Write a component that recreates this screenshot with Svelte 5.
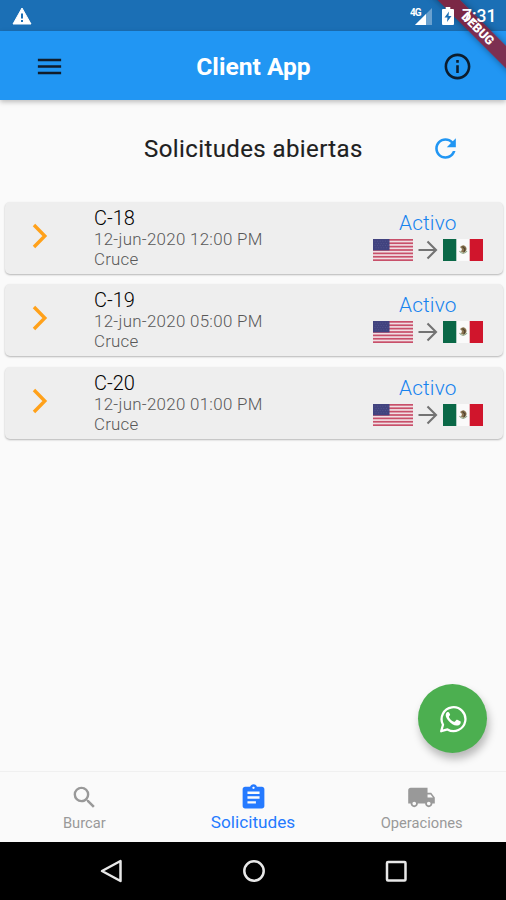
<script>
  const requests = [
    { id: 'C-18', date: '12-jun-2020 12:00 PM', kind: 'Cruce', status: 'Activo' },
    { id: 'C-19', date: '12-jun-2020 05:00 PM', kind: 'Cruce', status: 'Activo' },
    { id: 'C-20', date: '12-jun-2020 01:00 PM', kind: 'Cruce', status: 'Activo' }
  ];
  const stripes = [0, 1, 2, 3, 4, 5, 6];
</script>

<div class="screen">
  <div class="status">
    <svg class="warn" width="20" height="18" viewBox="0 0 20 18">
      <path d="M10 1 19 17H1Z" fill="#fff" stroke="#fff" stroke-linejoin="round" />
      <path d="M10 6.5v5M10 13v2" stroke="#1b6fb5" stroke-width="2" />
    </svg>
    <div class="system">
      <svg width="24" height="22" viewBox="0 0 24 22">
        <path d="M22 3V20H5Z" fill="#fff" opacity=".35" />
        <path d="M16 9V20H5Z" fill="#fff" />
        <text x="0" y="10.500" class="net">4G</text>
      </svg>
      <svg class="battery" width="12" height="18" viewBox="0 0 12 18">
        <path d="M1 2h2.7V0h4.6v2H11q1 0 1 1v14q0 1-1 1H1q-1 0-1-1V3q0-1 1-1Z" fill="#fff" />
        <path d="M7 4.500 2.500 10.500h3L5 15l4.500-6h-3Z" fill="#1b6fb5" />
      </svg>
      <span class="clock">7:31</span>
    </div>
  </div>

  <header>
    <svg width="31" height="31" viewBox="0 0 24 24" fill="#111d2b"><path d="M3 18h18v-2H3v2zm0-5h18v-2H3v2zm0-7v2h18V6H3z" /></svg>
    <h1>Client App</h1>
    <svg width="31" height="31" viewBox="0 0 24 24" fill="#0c1c2d"><path d="M11 7h2v2h-2zm0 4h2v6h-2zm1-9C6.48 2 2 6.48 2 12s4.48 10 10 10 10-4.48 10-10S17.52 2 12 2zm0 18c-4.41 0-8-3.59-8-8s3.59-8 8-8 8 3.59 8 8-3.59 8-8 8z" /></svg>
  </header>

  <div class="banner"><div class="ribbon">DEBUG</div></div>

  <main>
    <div class="heading">
      <h2>Solicitudes abiertas</h2>
      <svg width="31" height="31" viewBox="0 0 24 24" fill="#2196f3"><path d="M17.65 6.35C16.2 4.9 14.21 4 12 4c-4.42 0-7.99 3.58-7.99 8s3.57 8 7.99 8c3.73 0 6.84-2.55 7.73-6h-2.08c-.82 2.33-3.04 4-5.65 4-3.31 0-6-2.69-6-6s2.69-6 6-6c1.66 0 3.14.69 4.22 1.78L13 11h7V4l-2.35 2.35z" /></svg>
    </div>

    <div class="list">
      {#each requests as r}
        <article>
          <svg class="chevron" width="16" height="26" viewBox="0 0 16 26"><path d="M2 2 12.8 13 2 24" fill="none" stroke="#ffa11a" stroke-width="3.4" /></svg>
          <div class="info">
            <span class="id">{r.id}</span>
            <span class="sub date">{r.date}</span>
            <span class="sub">{r.kind}</span>
          </div>
          <div class="state">
            <span class="active">{r.status}</span>
            <div class="route">
              <svg width="40" height="22" viewBox="0 0 40 22">
                <rect width="40" height="22" fill="#f0dfe3" />
                {#each stripes as s}
                  <rect y={s * 3.385} width="40" height="1.7" fill="#c8506a" />
                {/each}
                <rect width="16.5" height="11.4" fill="#41437f" />
                <path d="M1.5 2.2h14M2.5 4.4h13M1.5 6.6h14M2.5 8.8h13" stroke="#5c5e94" stroke-width=".7" stroke-dasharray="1 1.6" />
              </svg>
              <svg class="arrow" width="20" height="20" viewBox="0 0 20 20"><path d="M.5 10H18M9.5 1.5 18 10 9.5 18.5" fill="none" stroke="#737373" stroke-width="2.1" /></svg>
              <svg width="40" height="22" viewBox="0 0 40 22">
                <rect width="40" height="22" fill="#fafafa" />
                <rect width="13.3" height="22" fill="#0a6847" />
                <rect x="26.7" width="13.3" height="22" fill="#d0152c" />
                <path d="M17 8q3-3 5-1 2.500 2 1 5l-2 2-3-1 1-3Z" fill="#8b7651" />
                <path d="M19.500 7.500 22 10l-1 3" fill="none" stroke="#514331" stroke-width="1.200" />
                <path d="M16.500 12q3.500 5 7.500 0" fill="none" stroke="#91a98a" stroke-width="1.200" />
              </svg>
            </div>
          </div>
        </article>
      {/each}
    </div>

    <div class="fab">
      <svg width="28" height="28" viewBox="0 0 28 28">
        <path d="M2.2 26.200 4 19.700A11.900 11.900 0 1 1 8.500 24.400Z" fill="none" stroke="#fff" stroke-width="2.300" stroke-linejoin="round" />
        <path d="M10.200 7.800c-.5-1-1.100-.8-1.600-.7-.8.300-1.900 1.400-1.900 3.100 0 1.800 1.300 3.700 3 5.700 2.200 2.500 5.200 4.400 7.700 4.700 1.900.2 3.700-1 4.100-2.200.3-.8.400-1.800-.2-2.100l-3-1.500c-.5-.2-.8-.1-1.200.4l-1.100 1.400c-.3.300-.6.300-1.100.1-2.300-1-3.800-2.500-4.900-4.500-.2-.4-.1-.7.300-1.100.7-.9 1-1.100.7-1.800Z" fill="#fff" />
      </svg>
    </div>
  </main>

  <nav class="tabs">
    <div class="tab">
      <svg width="29" height="29" viewBox="0 0 24 24" fill="#999"><path d="M15.500 14h-.79l-.28-.27A6.471 6.471 0 0 0 16 9.500 6.500 6.500 0 1 0 9.500 16c1.610 0 3.090-.59 4.230-1.570l.27.28v.79l5 4.990L20.490 19l-4.990-5zm-6 0C7.010 14 5 11.990 5 9.500S7.010 5 9.500 5 14 7.010 14 9.500 11.990 14 9.500 14z" /></svg>
      <span>Burcar</span>
    </div>
    <div class="tab on">
      <svg width="29" height="29" viewBox="0 0 24 24" fill="#257aff"><path d="M19 3h-4.180C14.400 1.840 13.300 1 12 1c-1.300 0-2.400.84-2.820 2H5c-1.100 0-2 .9-2 2v14c0 1.100.9 2 2 2h14c1.100 0 2-.9 2-2V5c0-1.100-.9-2-2-2zm-7 0c.55 0 1 .45 1 1s-.45 1-1 1-1-.45-1-1 .45-1 1-1zm2 14H7v-2h7v2zm3-4H7v-2h10v2zm0-4H7V7h10v2z" /></svg>
      <span>Solicitudes</span>
    </div>
    <div class="tab">
      <svg width="29" height="29" viewBox="0 0 24 24" fill="#999"><path d="M20 8h-3V4H3c-1.100 0-2 .9-2 2v11h2c0 1.660 1.340 3 3 3s3-1.340 3-3h6c0 1.660 1.340 3 3 3s3-1.340 3-3h2v-5l-3-4zM6 18.500c-.83 0-1.500-.67-1.500-1.500s.67-1.500 1.500-1.500 1.500.67 1.500 1.500-.67 1.500-1.500 1.500zm13.500-9 1.960 2.500H17V9.500h2.500zm-1.500 9c-.83 0-1.500-.67-1.500-1.500s.67-1.500 1.500-1.500 1.500.67 1.500 1.500-.67 1.500-1.500 1.500z" /></svg>
      <span>Operaciones</span>
    </div>
  </nav>

  <div class="keys">
    <svg width="24" height="24" viewBox="0 0 24 24"><path d="M21.500 2V22L3 12Z" /></svg>
    <svg width="24" height="24" viewBox="0 0 24 24"><circle cx="12" cy="12" r="9.700" /></svg>
    <svg width="24" height="24" viewBox="0 0 24 24"><rect x="3" y="3" width="18.500" height="18.500" rx="1" /></svg>
  </div>
</div>

<style>
  :global(body) { margin: 0; }
  .screen {
    position: relative;
    width: 506px;
    height: 900px;
    overflow: hidden;
    display: flex;
    flex-direction: column;
    background: #fafafa;
    font-family: Roboto, "Liberation Sans", sans-serif;
  }
  svg { display: block; flex: none; }
  .status {
    height: 31px;
    box-sizing: border-box;
    background: #1b6fb5;
    display: flex;
    justify-content: space-between;
    padding: 0 10px 0 12px;
  }
  .warn { margin-top: 7px; }
  .system { display: flex; align-items: flex-start; padding-top: 5px; }
  .net { font: 700 10px Roboto, sans-serif; fill: #fff; letter-spacing: -1px; }
  .battery { position: relative; z-index: 3; margin: 2px 0 0 8px; }
  .clock {
    position: relative;
    z-index: 3;
    width: 34px;
    margin-left: 8px;
    font-size: 17.500px;
    line-height: 22px;
    font-weight: 500;
    color: #fff;
  }
  header {
    height: 69px;
    box-sizing: border-box;
    flex: none;
    display: flex;
    align-items: center;
    justify-content: space-between;
    padding: 1px 33px 0 34px;
    background: #2196f3;
    box-shadow: 0 2px 5px rgba(0, 0, 0, .25);
  }
  h1 { margin: 0; padding-top: 1px; font-size: 24.600px; line-height: 30px; font-weight: 700; color: #fff; white-space: nowrap; }
  .banner {
    position: absolute;
    z-index: 2;
    top: 0;
    right: 0;
    width: 80px;
    height: 80px;
    overflow: hidden;
  }
  .ribbon {
    position: absolute;
    left: -8px;
    top: 21px;
    width: 120px;
    height: 15.500px;
    transform: rotate(45deg);
    background: rgba(145, 25, 45, .82);
    box-shadow: 0 0 7px rgba(0, 0, 0, .4);
    color: #fff;
    font-size: 12.500px;
    line-height: 15.500px;
    font-weight: 900;
    text-align: center;
  }
  main { position: relative; flex: 1; display: flex; flex-direction: column; }
  .heading { display: flex; align-items: center; height: 97px; padding-left: 144px; justify-content: space-between; padding-right: 45px; }
  h2 { margin: 0; font-size: 24px; line-height: 30px; font-weight: 400; color: #202020; white-space: nowrap; letter-spacing: .4px; -webkit-text-stroke: .15px #202020; }
  .list { display: flex; flex-direction: column; gap: 10.400px; padding: 5px 3px 0 5px; }
  article {
    height: 72px;
    box-sizing: border-box;
    display: flex;
    align-items: flex-start;
    padding: 5px 20.500px 0 27px;
    border-radius: 5px;
    background: #eee;
    box-shadow: 0 1px 2px rgba(0, 0, 0, .28);
  }
  .chevron { margin-top: 16px; }
  .info { display: flex; flex-direction: column; margin-left: 46px; flex: 1; }
  .id { font-size: 20px; line-height: 23px; font-weight: 300; color: #000; }
  .sub { font-size: 16.900px; line-height: 19.800px; font-weight: 300; letter-spacing: .2px; color: #585858; }
  .date { letter-spacing: .3px; }
  .state { display: flex; flex-direction: column; align-items: center; padding-top: 3px; }
  .active { font-size: 20.800px; line-height: 26px; font-weight: 300; color: #1683ee; letter-spacing: .15px; }
  .route { display: flex; align-items: center; margin-top: 3px; }
  .arrow { margin: 0 4.500px 0 5px; }
  .fab {
    position: absolute;
    right: 19px;
    bottom: 18px;
    width: 69px;
    height: 69px;
    border-radius: 50%;
    background: #4caf50;
    box-shadow: 2px 6px 9px rgba(0, 0, 0, .27);
    display: flex;
    align-items: center;
    justify-content: center;
  }
  .tabs { height: 71px; box-sizing: border-box; display: flex; border-top: 1px solid #f0f0f0; background: #fafafa; flex: none; }
  .tab { flex: 1; display: flex; flex-direction: column; align-items: center; padding-top: 11px; color: #999; font-size: 14.700px; line-height: 22px; }
  .on { color: #257aff; font-size: 17.200px; line-height: 21px; }
  .keys {
    height: 58px;
    box-sizing: border-box;
    flex: none;
    background: #000;
    display: flex;
    justify-content: space-between;
    padding: 17px 98px 0 99px;
  }
  .keys svg { fill: none; stroke: #e8e8e8; stroke-width: 2.500; stroke-linejoin: round; }
</style>
